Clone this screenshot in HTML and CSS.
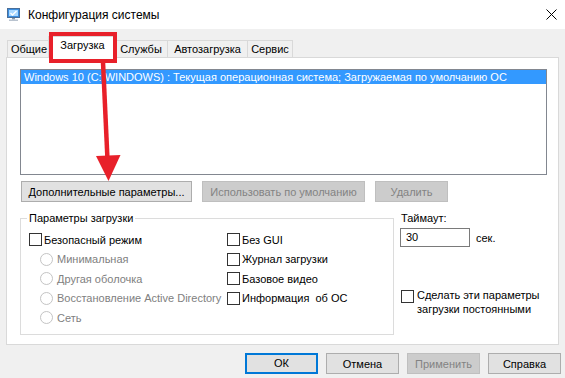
FILE: index.html
```html
<!DOCTYPE html>
<html lang="ru">
<head>
<meta charset="utf-8">
<title>Конфигурация системы</title>
<link rel="stylesheet" href="styles.css">
</head>
<body>
<div class="window">
  <div class="titlebar">
    <svg class="appicon" viewBox="0 0 13 13" width="13" height="13">
      <rect x="0.5" y="0.5" width="12" height="9" fill="#3b8ee0" stroke="#4a6e98"/>
      <rect x="2" y="2" width="9" height="6" fill="#a9d8ff"/>
      <path d="M3.5 5 L5.5 7 L9.5 3" stroke="#ffffff" fill="none" stroke-width="1.3"/>
      <rect x="5" y="10" width="3" height="1.5" fill="#8a98a8"/>
      <rect x="2" y="11.5" width="9" height="1.5" fill="#b9c3cf"/>
    </svg>
    <span class="title">Конфигурация системы</span>
    <svg class="close" viewBox="0 0 11 11" width="11" height="11">
      <path d="M0.5 0.5 L10.5 10.5 M10.5 0.5 L0.5 10.5" stroke="#000" stroke-width="1" fill="none"/>
    </svg>
  </div>

  <div class="tabs">
    <div class="tab t1">Общие</div>
    <div class="tab t2 active">Загрузка</div>
    <div class="tab t3">Службы</div>
    <div class="tab t4">Автозагрузка</div>
    <div class="tab t5">Сервис</div>
  </div>

  <div class="panel">
    <div class="listbox">
      <div class="item selected">Windows 10 (C:\WINDOWS) : Текущая операционная система; Загружаемая по умолчанию ОС</div>
    </div>

    <div class="btnrow">
      <button class="btn w-adv">Дополнительные параметры...</button>
      <button class="btn w-def disabled">Использовать по умолчанию</button>
      <button class="btn w-del disabled">Удалить</button>
    </div>

    <div class="lower">
      <fieldset class="group">
        <legend>Параметры загрузки</legend>
        <div class="cols">
          <div class="col col1">
            <div class="row"><span class="cb"></span><span>Безопасный режим</span></div>
            <div class="row indent dis"><span class="rb"></span><span>Минимальная</span></div>
            <div class="row indent dis"><span class="rb"></span><span>Другая оболочка</span></div>
            <div class="row indent dis"><span class="rb"></span><span>Восстановление Active Directory</span></div>
            <div class="row indent dis"><span class="rb"></span><span>Сеть</span></div>
          </div>
          <div class="col col2">
            <div class="row"><span class="cb"></span><span>Без GUI</span></div>
            <div class="row"><span class="cb"></span><span>Журнал загрузки</span></div>
            <div class="row"><span class="cb"></span><span>Базовое видео</span></div>
            <div class="row"><span class="cb"></span><span class="pre">Информация  об ОС</span></div>
          </div>
        </div>
      </fieldset>

      <div class="side">
        <div class="tlabel">Таймаут:</div>
        <div class="trow">
          <div class="input">30</div>
          <span class="unit">сек.</span>
        </div>
        <div class="perm">
          <span class="cb"></span>
          <span class="permtext">Сделать эти параметры<br>загрузки постоянными</span>
        </div>
      </div>
    </div>
  </div>

  <div class="footer">
    <button class="btn fb default">ОК</button>
    <button class="btn fb">Отмена</button>
    <button class="btn fb disabled">Применить</button>
    <button class="btn fb">Справка</button>
  </div>

  <svg class="annot" viewBox="0 0 565 378" width="565" height="378">
    <rect x="51" y="34" width="64" height="27" fill="none" stroke="#e8202a" stroke-width="4"/>
    <line x1="103" y1="62" x2="107.5" y2="160" stroke="#e8202a" stroke-width="4.5"/>
    <polygon points="96,156 120.5,155 108.5,181" fill="#e8202a"/>
  </svg>
</div>
</body>
</html>
```
FILE: styles.css
```css
* { box-sizing: border-box; }

html, body {
  margin: 0;
  padding: 0;
}

body {
  width: 565px;
  height: 378px;
  overflow: hidden;
  background: #f0f0f0;
  font-family: "Liberation Sans", Arial, sans-serif;
  font-size: 11px;
  color: #000;
}

.window {
  position: relative;
  width: 565px;
  height: 378px;
}

/* Title bar */
.titlebar {
  height: 29px;
  background: #fff;
  display: flex;
  align-items: center;
}
.appicon {
  margin-left: 7px;
  margin-right: 8px;
  flex: none;
}
.title {
  flex: 1;
  font-size: 12px;
  padding-top: 1px;
}
.close {
  margin-right: 8px;
  flex: none;
}

/* Tabs */
.tabs {
  display: flex;
  align-items: flex-end;
  height: 28px;
  padding-left: 7px;
}
.tab {
  height: 17px;
  border: 1px solid #d9d9d9;
  border-bottom: 0;
  background: #f0f0f0;
  text-align: center;
  line-height: 16px;
  white-space: nowrap;
  margin-left: -1px;
}
.t1 { width: 44px; margin-left: 0; }
.t2 { width: 65px; }
.t3 { width: 54px; }
.t4 { width: 81px; }
.t5 { width: 46px; }
.tab.active {
  width: 69px;
  height: 22px;
  margin-left: -3px;
  margin-right: -2px;
  margin-bottom: -1px;
  background: #fff;
  position: relative;
  z-index: 2;
  line-height: 16px;
}

/* Panel */
.panel {
  margin: 0 6px;
  height: 288px;
  border: 1px solid #d9d9d9;
  background: #fff;
  padding: 11px 11px 0 13px;
}

.listbox {
  height: 106px;
  border: 1px solid #828790;
  background: #fff;
  overflow: hidden;
}
.item {
  height: 14px;
  line-height: 14px;
  padding-left: 3px;
  white-space: nowrap;
  overflow: hidden;
}
.item.selected {
  background: #3399ff;
  color: #fff;
}

/* Buttons */
.btn {
  font-family: inherit;
  font-size: 11px;
  color: #000;
  height: 21px;
  padding: 0;
  margin: 0;
  border: 1px solid #adadad;
  background: #e1e1e1;
  text-align: center;
  white-space: nowrap;
  line-height: 18px;
}
.btn.disabled {
  background: #cccccc;
  border-color: #bfbfbf;
  color: #838383;
}
.btnrow {
  display: flex;
  gap: 10px;
  margin-top: 6px;
  margin-left: 1px;
}
.w-adv { width: 171px; }
.w-def { width: 163px; }
.w-del { width: 73px; }

/* Lower section */
.lower {
  display: flex;
  margin-top: 9px;
}
.group {
  width: 374px;
  flex: none;
  margin: 0;
  min-width: 0;
  border: 1px solid #dcdcdc;
  padding: 5px 0 6px 8px;
}
.group legend {
  padding: 0 2px;
  margin-left: -2px;
  line-height: 14px;
  height: 14px;
}
.cols {
  display: flex;
}
.col1 { width: 198px; }
.col2 { flex: 1; }
.row {
  height: 19.5px;
  display: flex;
  align-items: center;
  white-space: nowrap;
}
.cb {
  width: 13px;
  height: 13px;
  border: 1px solid #333;
  background: #fff;
  margin-right: 2px;
  flex: none;
}
.rb {
  width: 13px;
  height: 13px;
  border: 1px solid #c4c4c4;
  border-radius: 50%;
  background: #fff;
  margin-right: 4px;
  flex: none;
}
.indent { padding-left: 11px; }
.dis { color: #808080; }
.pre { white-space: pre; }

.side {
  flex: 1;
  padding-left: 6px;
  white-space: nowrap;
}
.tlabel {
  line-height: 14px;
  height: 14px;
  padding-left: 1px;
}
.trow {
  display: flex;
  align-items: center;
  margin-top: 3px;
}
.input {
  width: 70px;
  height: 19px;
  border: 1px solid #7a7a7a;
  background: #fff;
  padding-left: 5px;
  line-height: 17px;
}
.unit {
  margin-left: 6px;
}
.perm {
  display: flex;
  align-items: flex-start;
  margin-top: 43px;
  padding-left: 1px;
}
.perm .cb {
  margin-right: 3px;
}
.permtext {
  line-height: 13.5px;
  margin-top: -1px;
}

/* Footer */
.footer {
  display: flex;
  justify-content: flex-end;
  gap: 8px;
  margin-top: 8px;
  padding-right: 4px;
}
.fb { width: 73px; }
.fb.default {
  border: 2px solid #0078d7;
  line-height: 17px;
}

/* Annotation overlay */
.annot {
  position: absolute;
  left: 0;
  top: 0;
  z-index: 10;
  pointer-events: none;
}
```
